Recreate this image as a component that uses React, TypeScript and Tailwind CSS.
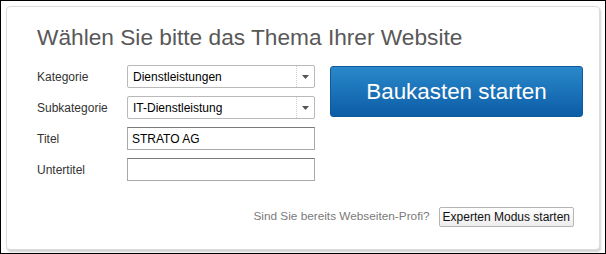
const font = { fontFamily: '"Liberation Sans", Arial, sans-serif' };

interface SelectProps {
  value: string;
}

const FakeSelect = ({ value }: SelectProps) => (
  <div className="flex h-[23px] w-[188px] items-stretch rounded-[2px] border border-[#b9b9b9] bg-white">
    <div className="flex flex-1 items-center pl-[5px] text-[12px] text-black">{value}</div>
    <div className="flex w-[18px] items-center justify-center border-l border-dotted border-[#cfcfcf]">
      <svg width="7" height="4" viewBox="0 0 7 4">
        <path d="M0 0h7L3.5 4z" fill="#555" />
      </svg>
    </div>
  </div>
);

const FakeInput = ({ value }: SelectProps) => (
  <div className="flex h-[23px] w-[188px] items-center border border-[#a9a9a9] border-t-[#7a7a7a] bg-white pl-[4px] text-[12px] text-black">
    {value}
  </div>
);

const rows = [
  { label: "Kategorie", field: <FakeSelect value="Dienstleistungen" /> },
  { label: "Subkategorie", field: <FakeSelect value="IT-Dienstleistung" /> },
  { label: "Titel", field: <FakeInput value="STRATO AG" /> },
  { label: "Untertitel", field: <FakeInput value="" /> },
];

export default function App() {
  return (
    <div className="h-[254px] w-[606px] border border-black bg-white p-[5px] pb-[3px] pr-[5px]" style={font}>
      <div className="flex h-[244px] flex-col rounded-[4px] border border-[#dcdcdc] bg-white pl-[30px] pr-[24px] pt-[17px] shadow-[1px_2px_2px_rgba(0,0,0,0.18)]">
        <h1 className="text-[22.7px] leading-[26px] text-[#585858]">Wählen Sie bitte das Thema Ihrer Website</h1>

        <div className="mt-[15px] flex gap-[15px]">
          <div className="flex flex-col gap-[8px]">
            {rows.map((r) => (
              <div key={r.label} className="flex items-center">
                <span className="w-[90px] text-[12px] text-[#333]">{r.label}</span>
                {r.field}
              </div>
            ))}
          </div>
          <div className="pt-[1px]">
            <button className="h-[51px] w-[253px] rounded-[3px] border border-[#0c5b9e] bg-gradient-to-b from-[#2a88ca] to-[#0b5da6] text-[22.4px] text-white">
              Baukasten starten
            </button>
          </div>
        </div>

        <div className="mt-[26px] flex items-center justify-end gap-[9px] pr-[1px]">
          <span className="text-[11.8px] text-[#7a7a7a]">Sind Sie bereits Webseiten-Profi?</span>
          <button className="h-[20px] rounded-[2px] border border-[#b5b5b5] bg-gradient-to-b from-white to-[#ededed] px-[3px] text-[12px] leading-[18px] text-[#111]">
            Experten Modus starten
          </button>
        </div>
      </div>
    </div>
  );
}
